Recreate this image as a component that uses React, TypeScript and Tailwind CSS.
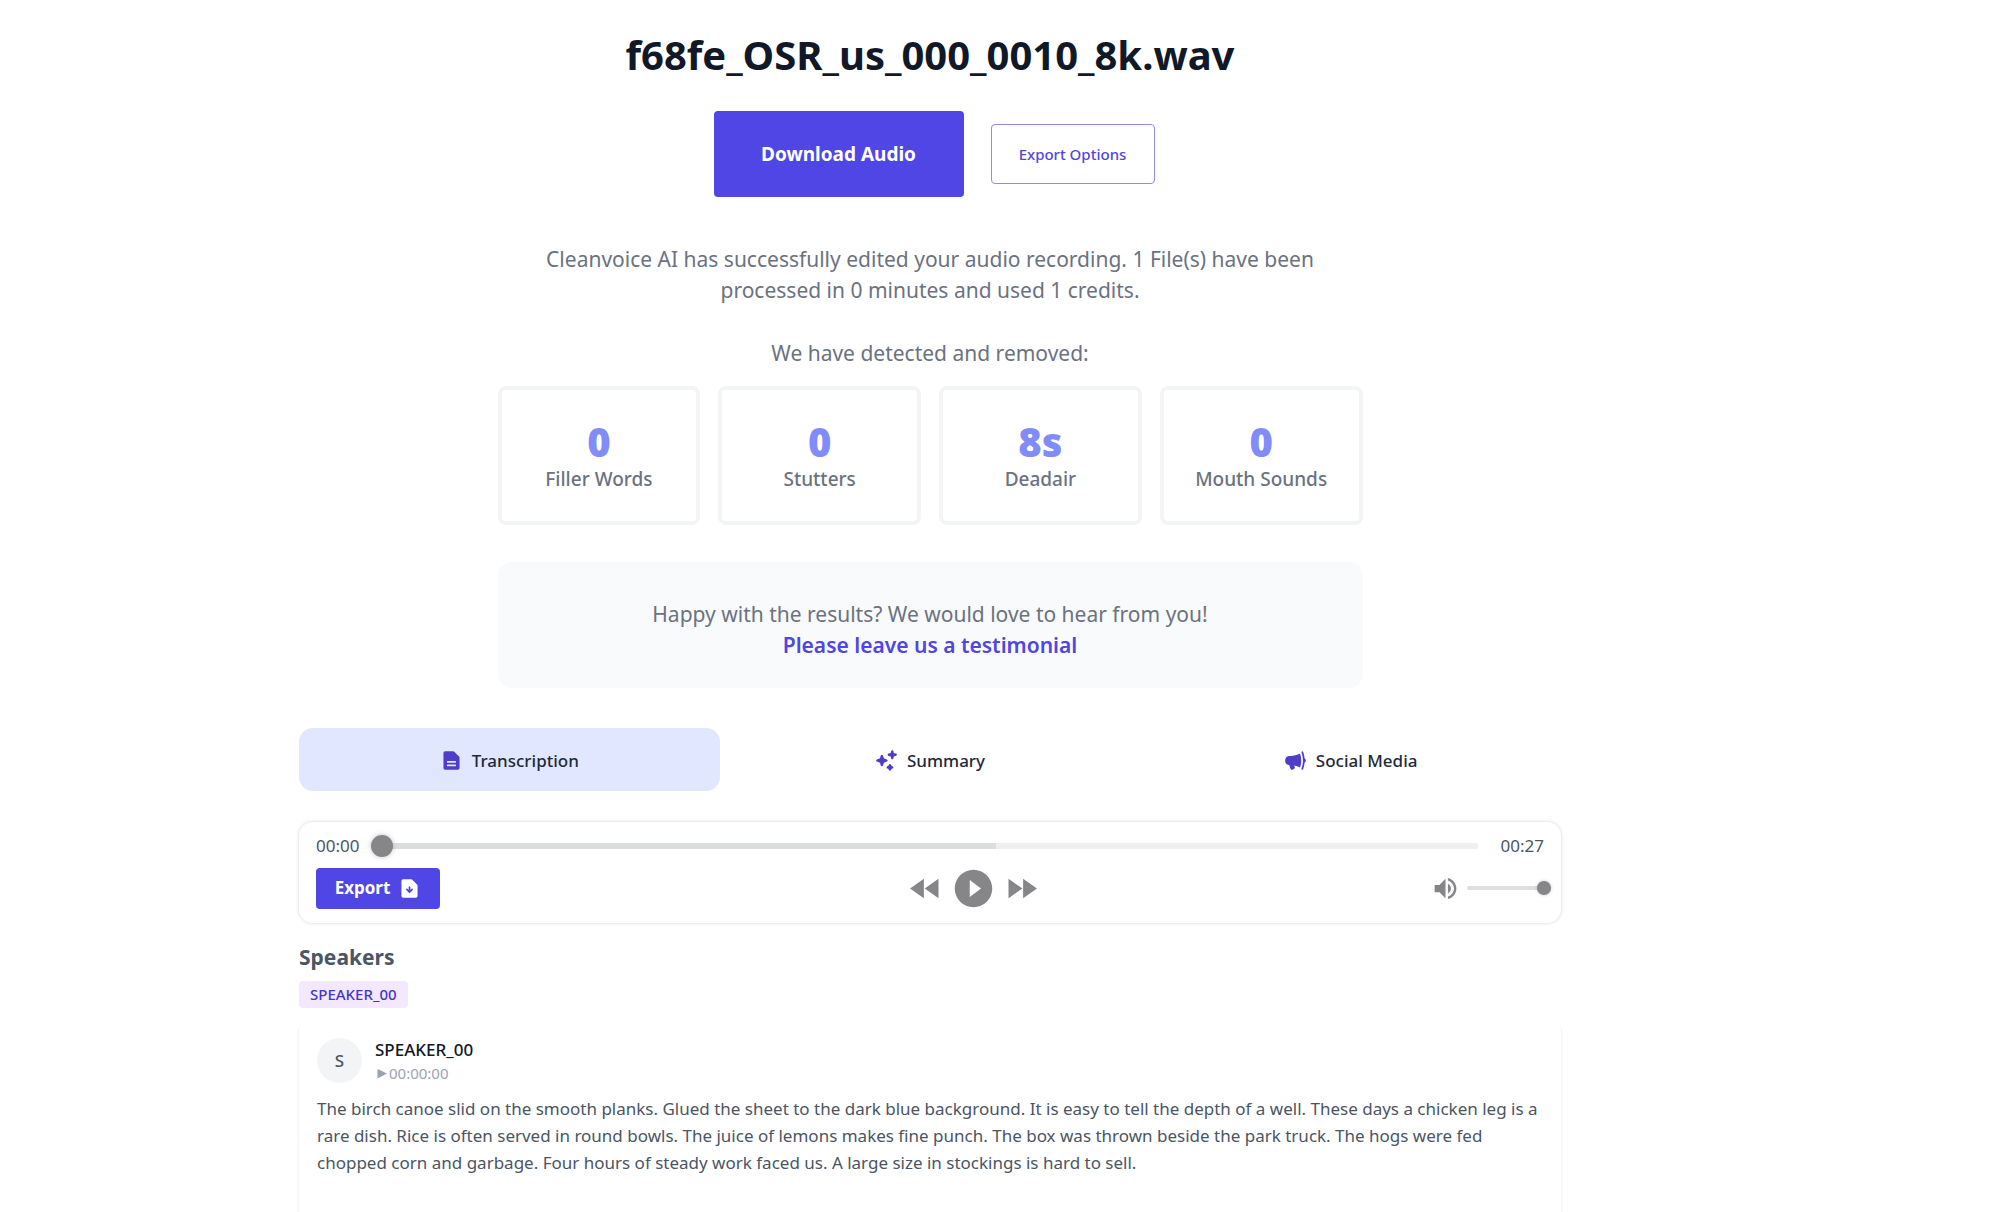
import React from "react";
import {
  HiMiniDocumentArrowDown,
  HiMiniDocumentText,
  HiMiniMegaphone,
  HiMiniSparkles,
} from "react-icons/hi2";
import {
  MdFastForward,
  MdFastRewind,
  MdPlayCircleFilled,
  MdVolumeUp,
} from "react-icons/md";

interface StatCardProps {
  value: string;
  label: string;
}

const StatCard: React.FC<StatCardProps> = ({ value, label }) => {
  return (
    <div className="flex flex-col items-center justify-center h-[139px] pt-2 border-4 border-gray-100 rounded-lg">
      <dd className="text-[40px] leading-[38px] font-black text-[#818cf8]">{value}</dd>
      <dt className="order-last text-[19px] leading-[36px] font-medium text-[#6b7280]">{label}</dt>
    </div>
  );
};

interface TabButtonProps {
  label: string;
  icon: React.ReactNode;
  active?: boolean;
}

const TabButton: React.FC<TabButtonProps> = ({ label, icon, active }) => {
  return (
    <button
      type="button"
      role="tab"
      aria-selected={!!active}
      className={`flex items-center justify-center gap-[9px] h-[63px] pt-[2px] rounded-[14px] text-[17px] font-medium text-[#1f2937] ${
        active ? "bg-[#e0e7ff]" : ""
      }`}
    >
      <span className="text-[23px] text-[#4f3cc9]">{icon}</span>
      {label}
    </button>
  );
};

const stats: StatCardProps[] = [
  { value: "0", label: "Filler Words" },
  { value: "0", label: "Stutters" },
  { value: "8s", label: "Deadair" },
  { value: "0", label: "Mouth Sounds" },
];

const Player: React.FC = () => {
  return (
    <section
      aria-label="Audio player"
      className="mt-[31px] px-[17px] pt-3 pb-1 rounded-[14px] shadow-[0_0_3px_1px_rgba(0,0,0,0.11)]"
    >
      <div className="flex items-center h-[23px] text-[17px] text-[#4b5563]">
        <span className="w-[43px]">00:00</span>
        <input
          type="range"
          aria-label="Seek"
          min={0}
          max={27}
          defaultValue={0}
          className="flex-1 min-w-0 mx-3 h-[22px] appearance-none bg-transparent [&::-webkit-slider-runnable-track]:h-[6px] [&::-webkit-slider-runnable-track]:rounded-xs [&::-webkit-slider-runnable-track]:bg-[linear-gradient(to_right,#dcdedd_56.5%,#eeefee_56.5%)] [&::-webkit-slider-thumb]:appearance-none [&::-webkit-slider-thumb]:-mt-2 [&::-webkit-slider-thumb]:size-[22px] [&::-webkit-slider-thumb]:rounded-full [&::-webkit-slider-thumb]:bg-[#868689] [&::-webkit-slider-thumb]:shadow-[0_0_5px_rgba(134,134,134,0.5)]"
        />
        <span className="w-[54px] text-right">00:27</span>
      </div>

      <div className="flex items-center h-[62px] text-[#868689]">
        <div className="flex-1">
          <button
            type="button"
            className="flex items-center justify-center gap-2 w-[124px] h-[41px] rounded-sm bg-[#4f46e5] text-[17px] font-bold text-white"
          >
            Export
            <HiMiniDocumentArrowDown size={23} />
          </button>
        </div>
        <div className="flex items-center gap-[6px] pl-20">
          <button type="button" aria-label="Rewind">
            <MdFastRewind size={39} />
          </button>
          <button type="button" aria-label="Play">
            <MdPlayCircleFilled size={45} />
          </button>
          <button type="button" aria-label="Forward">
            <MdFastForward size={39} />
          </button>
        </div>
        <div className="flex flex-1 items-center justify-end gap-[7px] -mr-[7px]">
          <button type="button" aria-label="Mute">
            <MdVolumeUp size={29} />
          </button>
          <input
            type="range"
            aria-label="Volume"
            defaultValue={100}
            className="w-[84px] h-[14px] appearance-none bg-transparent [&::-webkit-slider-runnable-track]:h-1 [&::-webkit-slider-runnable-track]:rounded-xs [&::-webkit-slider-runnable-track]:bg-[#dfdfe1] [&::-webkit-slider-thumb]:appearance-none [&::-webkit-slider-thumb]:-mt-[5px] [&::-webkit-slider-thumb]:size-[14px] [&::-webkit-slider-thumb]:rounded-full [&::-webkit-slider-thumb]:bg-[#868689] [&::-webkit-slider-thumb]:shadow-[0_0_3px_rgba(134,134,134,0.5)]"
          />
        </div>
      </div>
    </section>
  );
};

const Transcript: React.FC = () => {
  return (
    <article className="flex-1 mt-[9px] px-[18px] pt-5 rounded-t-[14px] shadow-[0_2px_3px_rgba(0,0,0,0.12)]">
      <div className="flex items-center gap-[13px]">
        <div className="flex items-center justify-center size-[45px] rounded-full bg-gray-100 text-[17px] font-medium text-[#4b5563]">
          S
        </div>
        <div>
          <h3 className="text-[17px] leading-[26px] font-medium text-[#111827]">SPEAKER_00</h3>
          <button type="button" className="flex items-center gap-[2px] text-[15px] leading-[21px] text-[#9ca3af]">
            <svg className="ml-[2px]" width="10" height="10" viewBox="0 0 10 10" fill="currentColor">
              <path d="M0.500 0L10 4.500L0.500 9.500Z" />
            </svg>
            00:00:00
          </button>
        </div>
      </div>
      <p className="mt-[11px] text-[17px] leading-[27px] text-[#4b5563]">
        The birch canoe slid on the smooth planks. Glued the sheet to the dark blue background. It is
        easy to tell the depth of a well. These days a chicken leg is a rare dish. Rice is often
        served in round bowls. The juice of lemons makes fine punch. The box was thrown beside the
        park truck. The hogs were fed chopped corn and garbage. Four hours of steady work faced us. A
        large size in stockings is hard to sell.
      </p>
    </article>
  );
};

const App: React.FC = () => {
  return (
    <div className="min-h-screen flex bg-white pr-[139px] font-['Noto_Sans',sans-serif]">
      <main className="flex flex-col w-full max-w-[1262px] mx-auto pt-[33px]">
        <div className="w-full max-w-[865px] mx-auto text-center text-[21px] leading-[31px] text-[#6b7280]">
          <h1 className="text-[40px] leading-[44px] font-bold text-[#111827]">
            f68fe_OSR_us_000_0010_8k.wav
          </h1>

          <div className="flex items-center justify-center gap-[27px] mt-[34px] pl-2">
            <button
              type="button"
              className="w-[250px] h-[86px] rounded-sm bg-[#4f46e5] text-[19px] font-bold text-white"
            >
              Download Audio
            </button>
            <button
              type="button"
              className="w-[164px] h-[60px] rounded-sm border border-[#8f89f0] text-[15px] font-medium text-[#4f46e5]"
            >
              Export Options
            </button>
          </div>

          <p className="mt-[47px] px-10">
            Cleanvoice AI has successfully edited your audio recording. 1 File(s) have been processed
            in 0 minutes and used 1 credits.
          </p>
          <p className="mt-8">We have detected and removed:</p>

          <dl className="grid grid-cols-4 gap-[18px] mt-[17px]">
            {stats.map((stat) => (
              <StatCard key={stat.label} {...stat} />
            ))}
          </dl>

          <div className="mt-[37px] px-8 pt-[37px] pb-[27px] rounded-[14px] bg-gray-50">
            <p>Happy with the results? We would love to hear from you!</p>
            <a href="#testimonial" className="font-semibold text-[#4f46e5]">
              Please leave us a testimonial
            </a>
          </div>
        </div>

        <div role="tablist" className="grid grid-cols-3 mt-10">
          <TabButton label="Transcription" icon={<HiMiniDocumentText />} active />
          <TabButton label="Summary" icon={<HiMiniSparkles />} />
          <TabButton label="Social Media" icon={<HiMiniMegaphone />} />
        </div>

        <Player />

        <h2 className="mt-5 text-[21px] leading-[28px] font-bold text-[#4b5563]">Speakers</h2>
        <div className="flex mt-[10px]">
          <span className="px-[11px] rounded-sm bg-[#f3e8ff] text-[15px] leading-[27px] font-medium text-[#4338ca]">
            SPEAKER_00
          </span>
        </div>

        <Transcript />
      </main>
    </div>
  );
};

export default App;
